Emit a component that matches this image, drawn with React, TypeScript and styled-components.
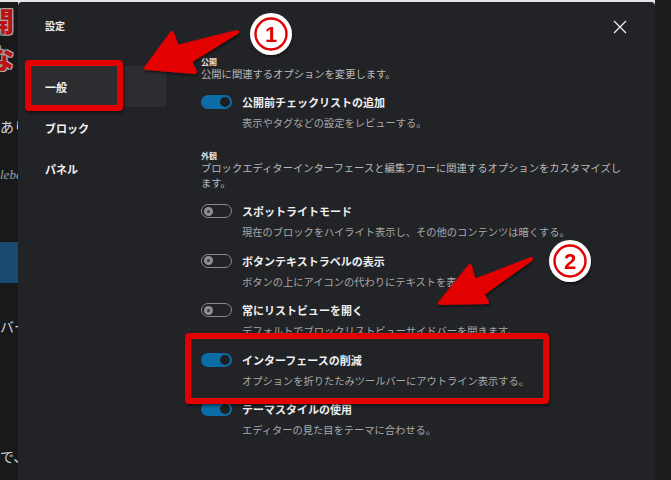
import styled, { createGlobalStyle } from "styled-components";

const GlobalStyle = createGlobalStyle`
  html, body {
    margin: 0;
    padding: 0;
    background: #1c1d1f;
    overflow: hidden;
  }
  * {
    box-sizing: border-box;
  }
`;

type OptionItem = {
  label: string;
  help: string;
  on: boolean;
};

const appearanceOptions: OptionItem[] = [
  { label: "スポットライトモード", help: "現在のブロックをハイライト表示し、その他のコンテンツは暗くする。", on: false },
  { label: "ボタンテキストラベルの表示", help: "ボタンの上にアイコンの代わりにテキストを表示する。", on: false },
  { label: "常にリストビューを開く", help: "デフォルトでブロックリストビューサイドバーを開きます。", on: false },
  { label: "インターフェースの削減", help: "オプションを折りたたみツールバーにアウトライン表示する。", on: true },
  { label: "テーマスタイルの使用", help: "エディターの見た目をテーマに合わせる。", on: true },
];

const Toggle = ({ on }: { on: boolean }) => (
  <Track $on={on}>
    <Knob $on={on} />
  </Track>
);

const Option = ({ label, help, on }: OptionItem) => (
  <OptionRow>
    <Toggle on={on} />
    <OptionLabel>{label}</OptionLabel>
    <OptionHelp>{help}</OptionHelp>
  </OptionRow>
);

const CloseIcon = () => (
  <svg width="16" height="16" viewBox="0 0 16 16">
    <path d="M2 2 L14 14 M14 2 L2 14" stroke="#e8e8e8" strokeWidth="1.4" fill="none" />
  </svg>
);

const Annotations = () => (
  <Overlay width="671" height="480" viewBox="0 0 671 480">
    <defs>
      <filter id="sh" x="-20%" y="-20%" width="140%" height="140%">
        <feDropShadow dx="1" dy="2" stdDeviation="1.2" floodColor="#000" floodOpacity="0.45" />
      </filter>
    </defs>
    <polygon
      points="146,68 172,33 177,47 237,32 190,61 195,72"
      fill="#e30000"
      stroke="#e30000"
      strokeWidth="4"
      strokeLinejoin="round"
      filter="url(#sh)"
    />
    <polygon
      points="440,303 470,266 474,281 531,259 482,294 487,302"
      fill="#e30000"
      stroke="#e30000"
      strokeWidth="4"
      strokeLinejoin="round"
      filter="url(#sh)"
    />
    <g filter="url(#sh)">
      <circle cx="271" cy="34" r="21" fill="#fff" />
      <circle cx="271" cy="34" r="15.5" fill="none" stroke="#e30000" strokeWidth="2.4" />
      <text x="271" y="42" fill="#e30000" fontSize="22" fontWeight="700" textAnchor="middle" fontFamily="'Liberation Sans', sans-serif">1</text>
    </g>
    <g filter="url(#sh)">
      <circle cx="570" cy="261" r="21" fill="#fff" />
      <circle cx="570" cy="261" r="15.5" fill="none" stroke="#e30000" strokeWidth="2.4" />
      <text x="570" y="269" fill="#e30000" fontSize="22" fontWeight="700" textAnchor="middle" fontFamily="'Liberation Sans', sans-serif">2</text>
    </g>
  </Overlay>
);

export default function App() {
  return (
    <Screen>
      <GlobalStyle />
      <PageBehind>
        <Headline>開</Headline>
        <Headline>な</Headline>
        <PageText $top={41}>あり</PageText>
        <PageItalic>lebe</PageItalic>
        <PageBlock />
        <PageText $top={34}>バー</PageText>
        <PageText $top={112}>で、</PageText>
      </PageBehind>

      <Modal>
        <Header>
          <Title>設定</Title>
          <CloseIcon />
        </Header>
        <Body>
          <Nav>
            <NavItem $active>一般</NavItem>
            <NavItem>ブロック</NavItem>
            <NavItem>パネル</NavItem>
          </Nav>
          <Content>
            <Section>
              <SectionTitle>公開</SectionTitle>
              <SectionDesc>公開に関連するオプションを変更します。</SectionDesc>
              <Options>
                <Option label="公開前チェックリストの追加" help="表示やタグなどの設定をレビューする。" on />
              </Options>
            </Section>
            <Section>
              <SectionTitle>外観</SectionTitle>
              <SectionDesc>
                ブロックエディターインターフェースと編集フローに関連するオプションをカスタマイズします。
              </SectionDesc>
              <Options>
                {appearanceOptions.map((o) => (
                  <Option key={o.label} {...o} />
                ))}
              </Options>
            </Section>
          </Content>
        </Body>
      </Modal>

      <RightEdge />

      <Highlight $x={25} $y={60} $w={98} $h={51} />
      <Highlight $x={185} $y={333} $w={364} $h={71} />
      <Annotations />
    </Screen>
  );
}

const Screen = styled.div`
  position: relative;
  width: 671px;
  height: 480px;
  display: flex;
  background: #e6e6e6;
  font-family: "Noto Sans CJK JP", "Noto Sans", sans-serif;
  overflow: hidden;
`;

const PageBehind = styled.div`
  width: 18px;
  flex-shrink: 0;
  margin-top: 2px;
  background: #18191b;
  overflow: hidden;
  white-space: nowrap;
  display: flex;
  flex-direction: column;
`;

const Headline = styled.div`
  margin-left: -13px;
  font-size: 27px;
  font-weight: 900;
  line-height: 37px;
  height: 37px;
  color: #b81313;
  text-shadow: 1px 1px 0 #a8a8a8, -1px -1px 0 #a8a8a8, 1px -1px 0 #a8a8a8, -1px 1px 0 #a8a8a8;
`;

const PageText = styled.div<{ $top: number }>`
  margin-top: ${(p) => p.$top}px;
  font-size: 14px;
  line-height: 18px;
  color: #cfd4da;
`;

const PageItalic = styled.div`
  margin-top: 32px;
  font-family: "Liberation Serif", serif;
  font-style: italic;
  font-size: 13px;
  line-height: 16px;
  color: #9aa0a8;
`;

const PageBlock = styled.div`
  margin-top: 59px;
  height: 41px;
  background: #1a4a72;
`;

const Modal = styled.div`
  width: 637px;
  flex-shrink: 0;
  margin-top: 2px;
  background: #222326;
  border-radius: 4px 4px 0 0;
  display: flex;
  flex-direction: column;
`;

const RightEdge = styled.div`
  flex: 1;
  background: #1c1d1f;
`;

const Header = styled.div`
  height: 53px;
  padding: 17px 27px 0 27px;
  display: flex;
  justify-content: space-between;
  align-items: flex-start;
`;

const Title = styled.h1`
  margin: 0;
  font-size: 10px;
  line-height: 14px;
  font-weight: 700;
  color: #ececec;
`;

const Body = styled.div`
  flex: 1;
  display: flex;
`;

const Nav = styled.nav`
  width: 148px;
  flex-shrink: 0;
  padding: 11px 0 0 7px;
  display: flex;
  flex-direction: column;
`;

const NavItem = styled.div<{ $active?: boolean }>`
  height: 41px;
  padding-left: 20px;
  display: flex;
  align-items: center;
  font-size: 11px;
  font-weight: 700;
  color: #f2f2f2;
  background: ${(p) => (p.$active ? "#2b2d30" : "transparent")};
  border-radius: 2px;
`;

const Content = styled.div`
  flex: 1;
  padding: 2px 32px 0 35px;
`;

const Section = styled.section`
  & + & {
    margin-top: 20px;
  }
`;

const SectionTitle = styled.h2`
  margin: 0;
  font-size: 8px;
  line-height: 9px;
  font-weight: 700;
  color: #e2e2e2;
`;

const SectionDesc = styled.p`
  margin: 0;
  font-size: 10.3px;
  line-height: 15px;
  color: #b9b9b9;
`;

const Options = styled.div`
  margin-top: 13px;
  display: flex;
  flex-direction: column;
  gap: 12.5px;
`;

const OptionRow = styled.div`
  display: grid;
  grid-template-columns: 31px 1fr;
  column-gap: 10px;
  row-gap: 5px;
  align-items: center;
`;

const OptionLabel = styled.div`
  font-size: 11px;
  line-height: 16px;
  font-weight: 700;
  color: #f0f0f0;
`;

const OptionHelp = styled.div`
  grid-column: 2;
  font-size: 10.25px;
  line-height: 16px;
  color: #a9a9a9;
`;

const Track = styled.div<{ $on: boolean }>`
  width: 31px;
  height: 14px;
  border-radius: 7px;
  display: flex;
  align-items: center;
  justify-content: ${(p) => (p.$on ? "flex-end" : "flex-start")};
  padding: 0 2px;
  background: ${(p) => (p.$on ? "#0b6ca6" : "transparent")};
  border: ${(p) => (p.$on ? "none" : "1px solid #8a8a8a")};
`;

const Knob = styled.div<{ $on: boolean }>`
  width: ${(p) => (p.$on ? 10 : 9)}px;
  height: ${(p) => (p.$on ? 10 : 9)}px;
  border-radius: 50%;
  background: ${(p) => (p.$on ? "#1e1f21" : "#8f8f8f")};
  display: flex;
  align-items: center;
  justify-content: center;

  &::after {
    content: "";
    display: ${(p) => (p.$on ? "none" : "block")};
    width: 3px;
    height: 3px;
    border-radius: 50%;
    background: #3a3a3a;
  }
`;

const Highlight = styled.div<{ $x: number; $y: number; $w: number; $h: number }>`
  position: absolute;
  left: ${(p) => p.$x}px;
  top: ${(p) => p.$y}px;
  width: ${(p) => p.$w}px;
  height: ${(p) => p.$h}px;
  border: 6px solid #e30000;
  border-radius: 4px;
  box-shadow: 1px 2px 3px rgba(0, 0, 0, 0.45);
`;

const Overlay = styled.svg`
  position: absolute;
  left: 0;
  top: 0;
  pointer-events: none;
`;
